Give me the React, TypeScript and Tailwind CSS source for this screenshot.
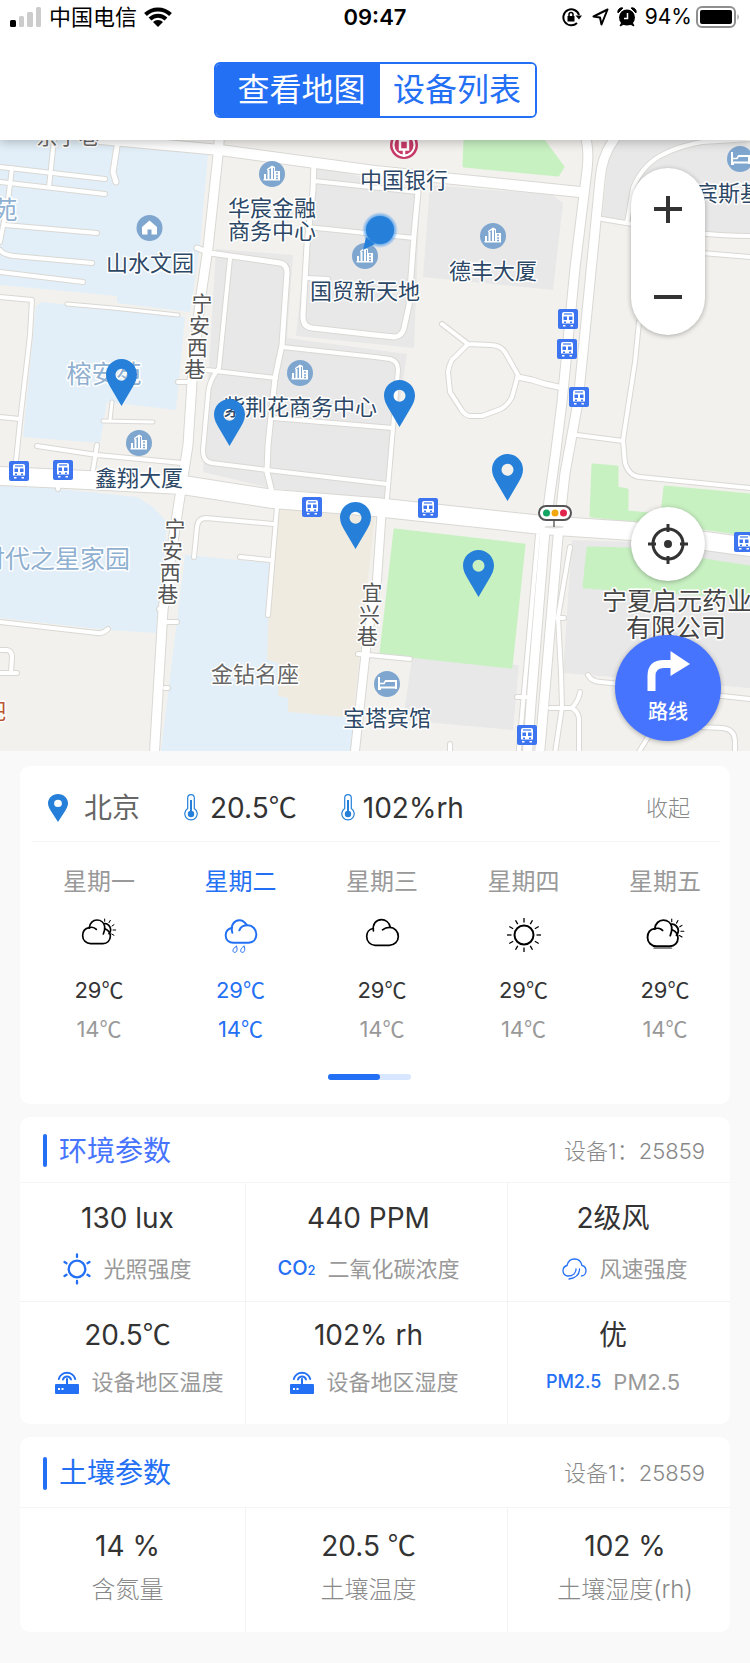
import type { ReactNode } from "react";

type Road = [path: string, width: number];
type Point = [x: number, y: number];

const BLUE_AREAS = [
  "M0 140L105 140L208 154L200 245L190 312L117 303V296L0 285Z",
  "M36 306L42 302L185 317L176 410L107 402L100 443L23 437Z",
  "M0 483L137 497L153 507L167 522L158 633L108 630L0 618Z",
  "M185 555L270 563L267 660L278 663V696L288 698V712L344 717H353L351 751H161Z",
];

const GREY_AREAS = [
  "M216 249L293 255L287 338L407 354L385 500L270 488L203 472L207 400Z",
  "M315 165L420 192L414 348L296 336L306 242Z",
  "M430 185L553 195L563 203L553 290L423 277Z",
  "M612 140H750V235L708 234L602 218L608 162Z",
  "M572 540L632 542L750 555V688L563 673Z",
  "M412 658L519 665L513 730L403 720Z",
];

const GREEN_AREAS = [
  "M465 140H543L563 167L558 175L464 166Z",
  "M395 530L524 545L511 667L381 653Z",
  "M593 465L617 467V488L627 490V512L662 515L665 487L750 495V535L702 528L591 516Z",
  "M588 548L632 549L750 567V597L584 587Z",
];

const ROADS: Road[] = [
  ["M0 167L105 179", 4],
  ["M0 182L105 194", 4],
  ["M54 140L49 187", 4],
  ["M12 168L8 200L0 242", 4],
  ["M118 140L113 172L116 182", 5],
  ["M5 225L97 233", 4],
  ["M0 250Q4 255 14 256L92 263", 4],
  ["M0 272L83 282", 4],
  ["M0 297L32 300L30 335L20 422L15 470", 4],
  ["M67 304L113 308L178 315", 3],
  ["M112 402L110 420M103 421L153 422", 3],
  ["M0 417L20 419", 4],
  ["M178 382H190", 4],
  ["M37 446L97 455L182 463M97 445L93 470", 4],
  ["M58 480V489", 4],
  ["M194 557L197 527Q198 518 206 518L273 524", 4],
  ["M277 507L272 567L268 615M240 557L270 560", 4],
  ["M0 622L97 633Q103 634 108 629", 4],
  ["M0 650H7Q12 651 12 657L11 673M0 673H17", 4],
  ["M159 609H165M165 622H177M165 688H168", 4],
  ["M314 162L313 190L307 245L303 314Q302 327 312 328L375 335L395 337Q402 336 404 328L409 305L414 235L418 192", 5],
  ["M314 181L418 192", 4],
  ["M307 227L414 238", 4],
  ["M307 278L328 279", 4],
  ["M197 248L210 253L280 263Q287 264 287 273L282 345L275 378L268 445L267 472L272 492", 5],
  ["M282 347L375 357L390 359Q398 361 398 370L393 428L387 498", 4],
  ["M230 258L219 368Q208 382 208 395L203 450Q203 462 212 463L267 470L387 484", 4],
  ["M207 370L276 378", 4],
  ["M273 418L393 428", 4],
  ["M442 324L468 344L490 345Q500 345 505 352L518 375L512 397Q508 405 501 409L482 416H470Q464 415 461 409L450 392L448 372Q450 360 455 357L468 344", 4],
  ["M518 377L532 380L545 384L563 388", 5],
  ["M602 219L632 224M627 223L633 188Q642 166 660 156T702 142L750 139", 4],
  ["M632 224Q700 236 750 236", 4],
  ["M690 252L750 257", 4],
  ["M639 322L635 362L623 440M577 435L623 441L625 463Q629 476 640 477L750 488", 4],
  ["M358 654L410 659M450 744V760", 4],
  ["M588 675Q592 682 601 682L630 685L722 696L750 699", 4],
  ["M550 708H572Q579 700 580 692M572 708Q579 712 579 720V760", 4],
  ["M700 727L722 728Q735 729 735 742V760M648 737L634 760", 4],
  ["M538 535L518 760", 4],
  ["M570 547L558 617L561 673L562 707L554 760M517 697H532M557 618H564", 4],
  ["M382 507L377 580L367 640L354 760", 8],
  ["M220 130L218 155L208 248L200 302L192 382L188 445L183 477L175 528L163 610L154 760", 9],
  ["M90 138L220 150L375 171L580 192", 10],
  ["M583 130Q590 145 587 170L575 268L562 402L556 450L545 530L531 703L527 760", 9],
  ["M622 130Q602 150 600 180L588 302L578 402L565 473L558 537L539 760", 9],
  ["M0 476L67 479L183 485L273 499L375 507L542 525L632 531L750 547", 18],
];

const BUS_STOPS: Point[] = [
  [19, 471], [63, 470], [312, 507], [428, 508], [527, 735],
  [744, 542], [568, 319], [567, 349], [579, 397],
];

const BUILDINGS: Point[] = [
  [272, 174], [365, 256], [300, 373], [139, 443], [493, 236],
];

const BEDS: Point[] = [[387, 684], [740, 159]];

const DEVICES: Point[] = [
  [121, 359], [229, 399], [399, 380], [507, 454], [478, 550], [355, 502],
];

const LABELS: { text: string; x: number; y: number; kind: string }[] = [
  { text: "京宁巷", x: 68, y: 144, kind: "fill-[#666666] text-[21px]" },
  { text: "苑", x: 5, y: 219, kind: "fill-[#8fb0d0] text-[25px]" },
  { text: "山水文园", x: 150, y: 271, kind: "fill-[#2d4866] text-[22px]" },
  { text: "华宸金融", x: 272, y: 216, kind: "fill-[#2d4866] text-[22px]" },
  { text: "商务中心", x: 272, y: 239, kind: "fill-[#2d4866] text-[22px]" },
  { text: "中国银行", x: 404, y: 188, kind: "fill-[#2d4866] text-[22px]" },
  { text: "国贸新天地", x: 365, y: 299, kind: "fill-[#2d4866] text-[22px]" },
  { text: "德丰大厦", x: 493, y: 279, kind: "fill-[#2d4866] text-[22px]" },
  { text: "宾斯基", x: 729, y: 201, kind: "fill-[#2d4866] text-[22px]" },
  { text: "榕安苑", x: 104, y: 383, kind: "fill-[#8fb0d0] text-[25px]" },
  { text: "紫荆花商务中心", x: 300, y: 415, kind: "fill-[#2d4866] text-[22px]" },
  { text: "鑫翔大厦", x: 139, y: 486, kind: "fill-[#2d4866] text-[22px]" },
  { text: "时代之星家园", x: 55, y: 568, kind: "fill-[#8fb0d0] text-[25px]" },
  { text: "金钻名座", x: 255, y: 682, kind: "fill-[#666666] text-[22px]" },
  { text: "宝塔宾馆", x: 387, y: 726, kind: "fill-[#2d4866] text-[22px]" },
  { text: "吧", x: -5, y: 719, kind: "fill-[#b9562f] text-[22px]" },
  { text: "宁夏启元药业", x: 677, y: 610, kind: "fill-[#444444] text-[25px]" },
  { text: "有限公司", x: 676, y: 637, kind: "fill-[#444444] text-[25px]" },
];

const STREETS: { text: string; x: number; y: number }[] = [
  { text: "宁安西巷", x: 202, y: 311 },
  { text: "宁安西巷", x: 175, y: 536 },
  { text: "宜兴巷", x: 372, y: 600 },
];

const PIN_PATH =
  "M15.5 0C7 0 0 6.900 0 15.500C0 20 2 24 4 27.500L15.500 47L27 27.500C29 24 31 20 31 15.500C31 6.900 24 0 15.500 0ZM15.500 9.800A6 6 0 1 1 15.500 21.800A6 6 0 1 1 15.500 9.800Z";

function CityMap() {
  return (
    <svg
      viewBox="0 140 750 611"
      preserveAspectRatio="xMidYMid slice"
      className="block h-full w-full"
      role="img"
      aria-label="设备分布地图"
    >
      <defs>
        <radialGradient id="glow">
          <stop offset="0.700" stopColor="#3d93ec" />
          <stop offset="1" stopColor="#3d93ec" stopOpacity="0" />
        </radialGradient>
      </defs>
      <rect x="0" y="140" width="750" height="611" fill="#f2f1ed" />
      <path d="M278 508L375 515L353 718L288 712V698L278 696V663L267 660L270 563Z" fill="#efebe0" />
      <g fill="#e8e8e8">{GREY_AREAS.map((d) => <path key={d} d={d} />)}</g>
      <g fill="#e2eff8">{BLUE_AREAS.map((d) => <path key={d} d={d} />)}</g>
      <g fill="#c8f1c2" stroke="#c8f1c2" strokeWidth="3" strokeLinejoin="round">
        {GREEN_AREAS.map((d) => <path key={d} d={d} />)}
      </g>
      <g fill="none" stroke="#d9d8d4" strokeLinecap="round" strokeLinejoin="round">
        {ROADS.map(([d, w]) => <path key={d} d={d} strokeWidth={w + 2} />)}
      </g>
      <g fill="none" stroke="#ffffff" strokeLinecap="round" strokeLinejoin="round">
        {ROADS.map(([d, w]) => <path key={d} d={d} strokeWidth={w} />)}
      </g>

      {BUILDINGS.map(([x, y]) => (
        <g key={`${x}-${y}`} transform={`translate(${x} ${y})`}>
          <circle r="13" fill="#7fa6cf" />
          <path d="M-8 6V0H-6V6ZM-4.500 6V-4H-2.500V6ZM-1 6V-7H1V6Z" fill="#fff" />
          <path d="M-5 -5L0 -8.500L3 -7V-3H8V6.500H-8.500V5H2V-6L0 -6.500L-5 -3.500Z" fill="#fff" />
          <path d="M4 -1H6M4 2H6M4 4.500H6" stroke="#7fa6cf" strokeWidth="1.300" />
        </g>
      ))}
      <g transform="translate(149.500 228)">
        <circle r="13" fill="#7fa6cf" />
        <path d="M0 -7.500L7.500 -1V6.500H2V1.500H-2V6.500H-7.500V-1Z" fill="#fff" />
      </g>
      {BEDS.map(([x, y]) => (
        <g key={`${x}-${y}`} transform={`translate(${x} ${y})`} fill="none" stroke="#fff" strokeWidth="2">
          <circle r="13" fill="#7fa6cf" stroke="none" />
          <path d="M-8 -7V5H-6M-8 3.500H9V5M9 3.500V-3H-2" />
          <path d="M-7 -0.500H-3L-1.500 -3" strokeWidth="1.500" />
        </g>
      ))}
      <g transform="translate(404 145)" fill="none" stroke="#fff">
        <circle r="14" fill="#c73a67" stroke="none" />
        <circle r="10.500" strokeWidth="2" />
        <path d="M-4 -4.500H4V4.500H-4ZM0 4.500V12M0 -4.500V-11" strokeWidth="2.500" />
      </g>

      {BUS_STOPS.map(([x, y]) => (
        <g key={`${x}-${y}`} transform={`translate(${x} ${y})`}>
          <rect x="-10" y="-10" width="20" height="20" rx="2" fill="#3d74f0" />
          <path d="M-6 -5Q-6 -7 -4 -7H4Q6 -7 6 -5V4.500H-6ZM-5 6H-2.500V7.500H-5ZM2.500 6H5V7.500H2.500Z" fill="#fff" />
          <path d="M-4 -5H4" stroke="#3d74f0" strokeWidth="1.200" />
          <path d="M-4.500 -2.500H-1V1H-4.500ZM1 -2.500H4.500V1H1ZM-4 2.500H-2V4H-4ZM2 2.500H4V4H2Z" fill="#3d74f0" />
        </g>
      ))}
      <g>
        <ellipse cx="554" cy="527" rx="10" ry="1.500" fill="#e0e0de" />
        <path d="M554 519V527" stroke="#666" strokeWidth="1.500" />
        <rect x="539" y="506" width="32" height="14" rx="7" fill="#fff" stroke="#555" strokeWidth="2" />
        <circle cx="546.500" cy="513" r="3.500" fill="#12a562" />
        <circle cx="555" cy="513" r="3.500" fill="#f0a80e" />
        <circle cx="563.500" cy="513" r="3.500" fill="#e0264e" />
      </g>

      <g
        textAnchor="middle"
        stroke="#ffffff"
        strokeWidth="3"
        strokeLinejoin="round"
        className="[paint-order:stroke]"
      >
        {LABELS.map((l) => (
          <text key={`${l.text}${l.y}`} x={l.x} y={l.y} className={l.kind}>{l.text}</text>
        ))}
        {STREETS.map((s) =>
          [...s.text].map((c, i) => (
            <text key={`${s.y}${c}`} x={s.x - i * 2.4} y={s.y + i * 22} className="fill-[#555555] text-[21px]">
              {c}
            </text>
          )),
        )}
      </g>

      <circle cx="380" cy="230" r="18" fill="url(#glow)" />
      <path d="M366 237L363 250L375 244Z" fill="#2680d9" />
      <circle cx="380" cy="230" r="14" fill="#2680d9" />
      {DEVICES.map(([x, y]) => (
        <path key={`${x}-${y}`} d={PIN_PATH} transform={`translate(${x - 15} ${y})`} fill="#2680d9" fillRule="evenodd" />
      ))}
    </svg>
  );
}

function StatusBar() {
  return (
    <div className="grid h-[34px] grid-cols-[1fr_auto_1fr] items-center pr-2.5 pl-2.5 text-black">
      <div className="flex items-center gap-[7px]">
        <svg width="32" height="20" viewBox="0 0 32 20" aria-hidden="true">
          <rect x="0" y="13" width="6" height="7" rx="1.500" fill="#000" />
          <rect x="9" y="9" width="5" height="11" rx="1.500" fill="#ccc" />
          <rect x="17" y="5" width="6" height="15" rx="1.500" fill="#ccc" />
          <rect x="26" y="0" width="5" height="20" rx="1.500" fill="#ccc" />
        </svg>
        <span className="text-[22px] leading-8">中国电信</span>
        <svg width="28" height="20" viewBox="0 0 28 20" aria-hidden="true">
          <path d="M1.500 7.500A18 18 0 0 1 26.500 7.500M6 12A11.500 11.500 0 0 1 22 12" fill="none" stroke="#000" strokeWidth="4" />
          <path d="M14 20L9 15A7 7 0 0 1 19 15Z" />
        </svg>
      </div>
      <span className="text-[22px] leading-8 font-semibold">09:47</span>
      <div className="flex items-center justify-end">
        <svg width="20" height="20" viewBox="0 0 20 20" className="mr-2.5" aria-hidden="true" fill="none" stroke="#000" strokeWidth="2">
          <path d="M15 16A8 8 0 1 1 17 8" />
          <path d="M13.500 8.500H20L17 12.500Z" fill="#000" stroke="none" />
          <rect x="5.500" y="9" width="7" height="5.500" fill="#000" stroke="none" />
          <path d="M7 9V7.500A2 2 0 0 1 11 7.500V9" strokeWidth="1.500" />
        </svg>
        <svg width="17" height="18" viewBox="0 0 17 18" className="mr-2" aria-hidden="true" fill="none" stroke="#000" strokeWidth="2" strokeLinejoin="round">
          <path d="M15.500 1.500L1.500 8.500L8 9.500L9.500 16.500Z" />
        </svg>
        <svg width="20" height="20" viewBox="0 0 20 20" className="mr-2" aria-hidden="true">
          <circle cx="10" cy="10.500" r="8" />
          <path d="M1 6A4 4 0 0 1 6 1ZM19 6A4 4 0 0 0 14 1ZM3 19L5 15L7 17ZM17 19L15 15L13 17Z" stroke="#000" />
          <path d="M10.500 6V11.500H7" fill="none" stroke="#fff" strokeWidth="1.500" />
        </svg>
        <span className="text-[21px] leading-8">94%</span>
        <svg width="44" height="22" viewBox="0 0 44 22" className="ml-1" aria-hidden="true">
          <rect x="1" y="1" width="38" height="20" rx="5" fill="none" stroke="#8f8f8f" strokeWidth="2" />
          <rect x="4" y="4" width="32" height="14" rx="2" />
          <path d="M41.500 8Q44 11 41.500 14Z" fill="#8f8f8f" />
        </svg>
      </div>
    </div>
  );
}

function Header() {
  return (
    <header className="relative z-10 bg-white pb-[22px] shadow-[0_2px_10px_rgba(0,0,0,0.25)]">
      <StatusBar />
      <div className="mx-auto mt-7 flex h-14 w-[323px] overflow-hidden rounded-md border-2 border-[#2370f5] text-[32px] leading-10">
        <button type="button" className="flex-1 bg-[#2370f5] pl-2 text-white">查看地图</button>
        <button type="button" className="w-[155px] bg-white text-[#2370f5]">设备列表</button>
      </div>
    </header>
  );
}

function MapControls() {
  return (
    <div className="absolute top-7 right-[29px] flex flex-col items-center">
      <div className="flex h-[167px] w-[74px] flex-col rounded-full bg-white shadow-[0_1px_5px_rgba(0,0,0,0.3)]">
        <button type="button" aria-label="放大" className="flex flex-1 items-center justify-center">
          <svg width="28" height="28" viewBox="0 0 28 28" stroke="#333" strokeWidth="4"><path d="M14 0V27M0 13H28" /></svg>
        </button>
        <button type="button" aria-label="缩小" className="flex flex-1 items-center justify-center">
          <svg width="28" height="28" viewBox="0 0 28 28" stroke="#333" strokeWidth="4"><path d="M0 18H28" /></svg>
        </button>
      </div>
      <button type="button" aria-label="定位" className="mt-[172px] flex h-[74px] w-[74px] items-center justify-center rounded-full bg-white shadow-[0_1px_5px_rgba(0,0,0,0.3)]">
        <svg width="40" height="40" viewBox="0 0 40 40" fill="none" stroke="#333" strokeWidth="3">
          <circle cx="20" cy="20" r="15" />
          <circle cx="20" cy="20" r="4" fill="#333" stroke="none" />
          <path d="M20 0V8M20 32V40M0 20H8M32 20H40" />
        </svg>
      </button>
      <button type="button" className="mt-[54px] flex h-[106px] w-[106px] flex-col items-center rounded-full bg-[#4674ff] pt-4 text-[20px] leading-7 font-medium text-white shadow-[0_1px_5px_rgba(0,0,0,0.3)]">
        <svg width="43" height="41" viewBox="0 0 43 41" aria-hidden="true">
          <path d="M4.500 40V25Q4.500 13 17 13H26" fill="none" stroke="#fff" strokeWidth="8" />
          <path d="M23.500 0L43 13L23.500 25Z" fill="#fff" />
        </svg>
        <span className="mt-1.5">路线</span>
      </button>
    </div>
  );
}

function CloudSun({ large = false }: { large?: boolean }) {
  return (
    <svg width={large ? 41 : 36} height={large ? 33 : 30} viewBox="242 487 108 90" fill="none" stroke="#000" strokeWidth="5" strokeLinecap="round" aria-hidden="true">
      {large && <path d="M265 569H312" stroke="#888" strokeWidth="5" />}
      <path d="M267 516C254 518 247 528 247 540C247 554 258 564 271 564H308C321 564 330 554 330 542C330 532 324 523 314 519" />
      <path d="M267 516C268 502 278 493 290 493C302 493 311 501 313 512C314 520 313 526 309 535" />
      <path d="M266 517C272 514 282 515 288 521" />
      <path d="M313 504C322 503 331 512 331 522C331 527 329 531 326 534" />
      <path d="M313 490V497M330 494L326 501M341 507L335 511M338 523H346M334 535L341 539" strokeWidth="3" />
    </svg>
  );
}

function RainCloud() {
  return (
    <svg width="34" height="36" viewBox="660 486 102 108" fill="none" stroke="#2370f5" strokeWidth="6" strokeLinecap="round" aria-hidden="true">
      <path d="M684 515C671 518 665 528 665 538C665 552 675 560 688 560H734C748 560 757 550 757 535C757 520 746 508 731 508C719 508 709 514 706 523" />
      <path d="M685 530C681 516 683 509 688 502C697 489 716 489 727 505" />
      <path d="M697 571C690 575 687 579 687 584C687 591 697 591 699 583C700 578 699 574 697 571ZM720 571C713 575 710 579 710 584C710 591 720 591 722 583C723 578 722 574 720 571Z" strokeWidth="3" />
    </svg>
  );
}

function Cloud() {
  return (
    <svg width="35" height="29" viewBox="1082 486 104 86" fill="none" stroke="#000" strokeWidth="5" strokeLinecap="round" aria-hidden="true">
      <path d="M1106 517C1094 519 1087 529 1087 540C1087 556 1098 567 1112 567H1154C1170 567 1181 555 1181 541C1181 526 1170 514 1155 514C1146 514 1139 517 1134 521" />
      <path d="M1107 524C1104 505 1114 491 1131 491C1143 491 1154 499 1157 513" />
    </svg>
  );
}

const RAY_ANGLES = [0, 30, 60, 90, 120, 150, 180, 210, 240, 270, 300, 330];

function Sun() {
  return (
    <svg width="34" height="34" viewBox="0 0 34 34" fill="none" stroke="#000" aria-hidden="true">
      <circle cx="17" cy="17" r="9.500" strokeWidth="2" />
      {RAY_ANGLES.map((a) => <path key={a} d="M17 0V4.500" strokeWidth="1.300" transform={`rotate(${a} 17 17)`} />)}
    </svg>
  );
}

const DAYS: { name: string; icon: ReactNode; active?: boolean }[] = [
  { name: "星期一", icon: <CloudSun /> },
  { name: "星期二", icon: <RainCloud />, active: true },
  { name: "星期三", icon: <Cloud /> },
  { name: "星期四", icon: <Sun /> },
  { name: "星期五", icon: <CloudSun large /> },
];

function Thermometer() {
  return (
    <svg width="14" height="27" viewBox="0 0 14 27" fill="none" stroke="#2680d9" aria-hidden="true">
      <path d="M3.700 14.500V4A3.300 3.300 0 0 1 10.300 4V14.500A6.200 6.200 0 1 1 3.700 14.500Z" strokeWidth="1.200" />
      <path d="M7 6V19" strokeWidth="2" />
      <circle cx="7" cy="20" r="3.200" fill="#2680d9" stroke="none" />
    </svg>
  );
}

function Celsius({ value }: { value: string }) {
  return (
    <span className="whitespace-pre">
      {value}
      <span className="font-['Noto_Sans_CJK_SC',sans-serif] leading-none">℃</span>
    </span>
  );
}

function WeatherCard() {
  return (
    <section className="rounded-[10px] bg-white pb-6">
      <div className="mr-2.5 ml-3 flex h-[76px] items-center border-b border-[#f5f5f5] pt-2 pr-[30px] pl-4 text-[28px] leading-10 text-[#333333]">
        <svg width="20" height="28" viewBox="0 0 31 47" preserveAspectRatio="none" aria-hidden="true">
          <path d={PIN_PATH} fill="#2680d9" fillRule="evenodd" />
        </svg>
        <h2 className="ml-4 text-[#666666]">北京</h2>
        <span className="ml-11 flex items-center gap-3"><Thermometer /><Celsius value="20.5" /></span>
        <span className="ml-11 flex items-center gap-2"><Thermometer />102%rh</span>
        <button type="button" className="ml-auto text-[22px] font-light text-[#888888]">收起</button>
      </div>
      <ul className="flex justify-between pt-6 pr-[29px] pl-[43px]">
        {DAYS.map((d) => (
          <li
            key={d.name}
            className={
              d.active
                ? "flex w-[72px] flex-col items-center text-[#2370f5]"
                : "flex w-[72px] flex-col items-center text-[#999999]"
            }
          >
            <span className="text-[24px] leading-8">{d.name}</span>
            <span className="mt-5 flex h-9 items-start">{d.icon}</span>
            <span className={d.active ? "mt-5 text-[22px] leading-8" : "mt-5 text-[22px] leading-8 text-[#333333]"}>
              <Celsius value="29" />
            </span>
            <span className="mt-[7px] text-[22px] leading-8"><Celsius value="14" /></span>
          </li>
        ))}
      </ul>
      <div className="mt-[29px] flex justify-center pr-3">
        <div className="h-1.5 w-[83px] rounded-full bg-[#d9e6ff]">
          <div className="h-full w-[52px] rounded-full bg-[#2370f5]" />
        </div>
      </div>
    </section>
  );
}

function LightIcon() {
  return (
    <svg width="28" height="32" viewBox="0 0 28 32" fill="none" stroke="#2370f5" strokeWidth="2.300" strokeLinecap="round" aria-hidden="true">
      <circle cx="14" cy="16" r="8.300" />
      <path d="M14 1.500V4M14 28V30.500M1.500 9L3.500 10.200M24.500 10.200L26.500 9M1.500 23L3.500 21.800M24.500 21.800L26.500 23" />
    </svg>
  );
}

function WindIcon() {
  return (
    <svg width="25" height="22" viewBox="0 0 25 22" fill="none" stroke="#2370f5" strokeWidth="1.300" strokeLinecap="round" aria-hidden="true">
      <path d="M14 11C14 15 11 18 6 18C3 18 1 15.500 1 13C1 10 3 8 5 7.500C6 3 9 1 12.500 1C16 1 19 3 20 7.500C22.500 8 24 10.500 24 13C24 15.500 22 17.700 19.500 18" />
      <path d="M17.500 11C17.500 16 14 20 7 21" />
    </svg>
  );
}

function RouterIcon() {
  return (
    <svg width="24" height="24" viewBox="0 0 24 24" aria-hidden="true">
      <path d="M3.800 9A8.500 8.500 0 0 1 20.200 9M8 9.500A4.200 4.200 0 0 1 16 9.500M12 9V15" fill="none" stroke="#2370f5" strokeWidth="2" strokeLinecap="round" />
      <rect x="0" y="14" width="24" height="10" rx="1" fill="#2370f5" />
      <path d="M3 18H5V20H3ZM6.500 18H8.500V20H6.500Z" fill="#fff" />
    </svg>
  );
}

type Metric = { value: ReactNode; label: string; icon?: ReactNode; inset?: string };

const ENV_ROWS: Metric[][] = [
  [
    { value: "130 lux", label: "光照强度", icon: <LightIcon /> },
    {
      value: "440 PPM",
      label: "二氧化碳浓度",
      icon: <span className="text-[20px] font-medium text-[#2370f5]">CO<span className="text-[13px]">2</span></span>,
    },
    { value: "2级风", label: "风速强度", icon: <WindIcon />, inset: "pl-6" },
  ],
  [
    { value: <Celsius value="20.5" />, label: "设备地区温度", icon: <RouterIcon />, inset: "pl-6" },
    { value: "102% rh", label: "设备地区湿度", icon: <RouterIcon />, inset: "pl-3" },
    { value: "优", label: "PM2.5", icon: <span className="text-[18px] font-medium text-[#2370f5]">PM2.5</span> },
  ],
];

const SOIL: Metric[] = [
  { value: "14 %", label: "含氮量" },
  { value: <Celsius value="20.5 " />, label: "土壤温度" },
  { value: "102 %", label: "土壤湿度(rh)" },
];

function CardHeader({ title, className }: { title: string; className: string }) {
  return (
    <div className={`flex items-center border-b border-[#f5f5f5] pt-0.5 pr-[25px] pl-[23px] ${className}`}>
      <span className="h-[33px] w-1 rounded-sm bg-[#2370f5]" />
      <h2 className="ml-3 text-[28px] leading-10">{title}</h2>
      <span className="ml-auto text-[22px] leading-8 font-light text-[#888888]">设备1：25859</span>
    </div>
  );
}

function EnvironmentCard() {
  return (
    <section className="rounded-[10px] bg-white">
      <CardHeader title="环境参数" className="h-[66px] text-[#4674ff]" />
      {ENV_ROWS.map((row, r) => (
        <div
          key={row[0].label}
          className={
            r === 0
              ? "grid grid-cols-[226fr_262fr_222fr] border-b border-[#f3f3f3]"
              : "grid grid-cols-[226fr_262fr_222fr]"
          }
        >
          {row.map((m) => (
            <div
              key={m.label}
              className={
                r === 0
                  ? "flex flex-col items-center gap-[15px] border-r border-[#f3f3f3] pt-[15px] pr-4 pb-4 first:pr-2.5 last:border-r-0 last:pr-3"
                  : "flex flex-col items-center gap-[11px] border-r border-[#f3f3f3] pt-[13px] pr-4 pb-[26px] first:pr-2.5 last:border-r-0 last:pr-3"
              }
            >
              <span className="text-[28px] leading-10 text-[#333333]">{m.value}</span>
              <span className={`flex h-8 items-center gap-3 text-[22px] leading-8 whitespace-nowrap text-[#999999] ${m.inset ?? ""}`}>
                {m.icon}
                {m.label}
              </span>
            </div>
          ))}
        </div>
      ))}
    </section>
  );
}

function SoilCard() {
  return (
    <section className="rounded-[10px] bg-white">
      <CardHeader title="土壤参数" className="h-[71px] text-[#2370f5]" />
      <div className="grid grid-cols-[226fr_262fr_222fr]">
        {SOIL.map((m) => (
          <div key={m.label} className="flex flex-col items-center gap-2 border-r border-[#f3f3f3] pt-[18px] pr-4 pb-[26px] first:pr-2.5 last:border-r-0 last:pr-0 last:pl-3">
            <span className="text-[28px] leading-10 text-[#333333]">{m.value}</span>
            <span className="text-[24px] leading-8 font-light text-[#888888]">{m.label}</span>
          </div>
        ))}
      </div>
    </section>
  );
}

export default function App() {
  return (
    <div className="min-h-screen bg-[#f9f9f9] font-['Inter','Noto_Sans_CJK_SC',sans-serif]">
      <Header />
      <div className="relative aspect-[750/611] overflow-hidden">
        <CityMap />
        <MapControls />
      </div>
      <main className="flex flex-col gap-[13px] px-5 pt-[15px] pb-[30px]">
        <WeatherCard />
        <EnvironmentCard />
        <SoilCard />
      </main>
    </div>
  );
}
